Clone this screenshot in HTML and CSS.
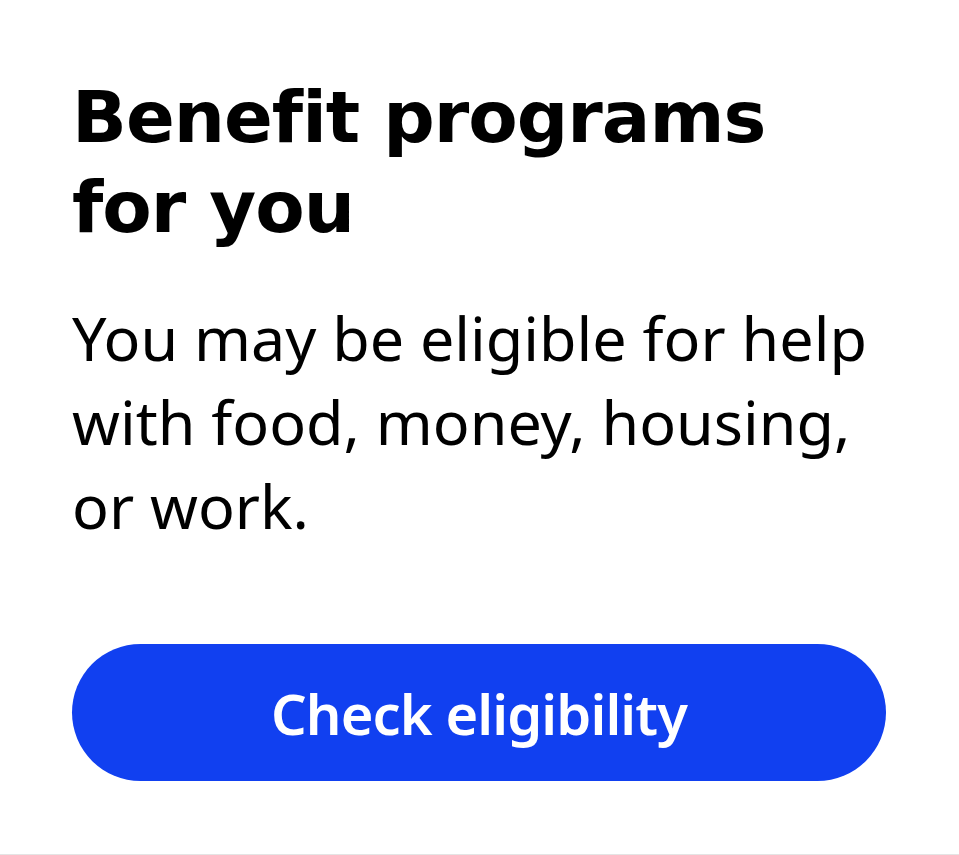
FILE: index.html
```html
<!DOCTYPE html>
<html>
<head>
    <meta charset="UTF-8">
    <title>Benefit programs</title>
    <link rel="stylesheet" href="styles.css">
</head>
<body>
    <div class="card">
        <h2 class="card-title">Benefit programs for you</h2>
        <p class="card-text">You may be eligible for help with food, money, housing, or work.</p>
        <a href="#" class="card-btn">Check eligibility</a>
    </div>
</body>
</html>
```
FILE: styles.css
```css
body,h1,h2,h3,p{margin:0;}
a{text-decoration: none; color: inherit;}
html, body{
    height: 100%;
    background-color: #ffffff;
}

.card{
    display: flex;
    flex-direction: column;
    height: 855px;
    padding: 72px 73px 0 72px;
    box-sizing: border-box;
    border-bottom: 1px solid #e4e4e4;
}

.card-title{
    font-family: "DejaVu Sans", "Liberation Sans", sans-serif;
    font-size: 72px;
    font-weight: 700;
    line-height: 90px;
    letter-spacing: -1px;
    color: #000000;
}

.card-text{
    margin-top: 44px;
    font-family: "Noto Sans", sans-serif;
    font-size: 61px;
    line-height: 84px;
    color: #000000;
}

.card-btn{
    display: flex;
    align-items: center;
    justify-content: center;
    height: 137px;
    margin-top: 96px;
    border-radius: 69px;
    background-color: #1140f0;
    font-family: "Noto Sans", sans-serif;
    font-size: 56px;
    font-weight: 600;
    letter-spacing: -0.9px;
    color: #ffffff;
}
```
